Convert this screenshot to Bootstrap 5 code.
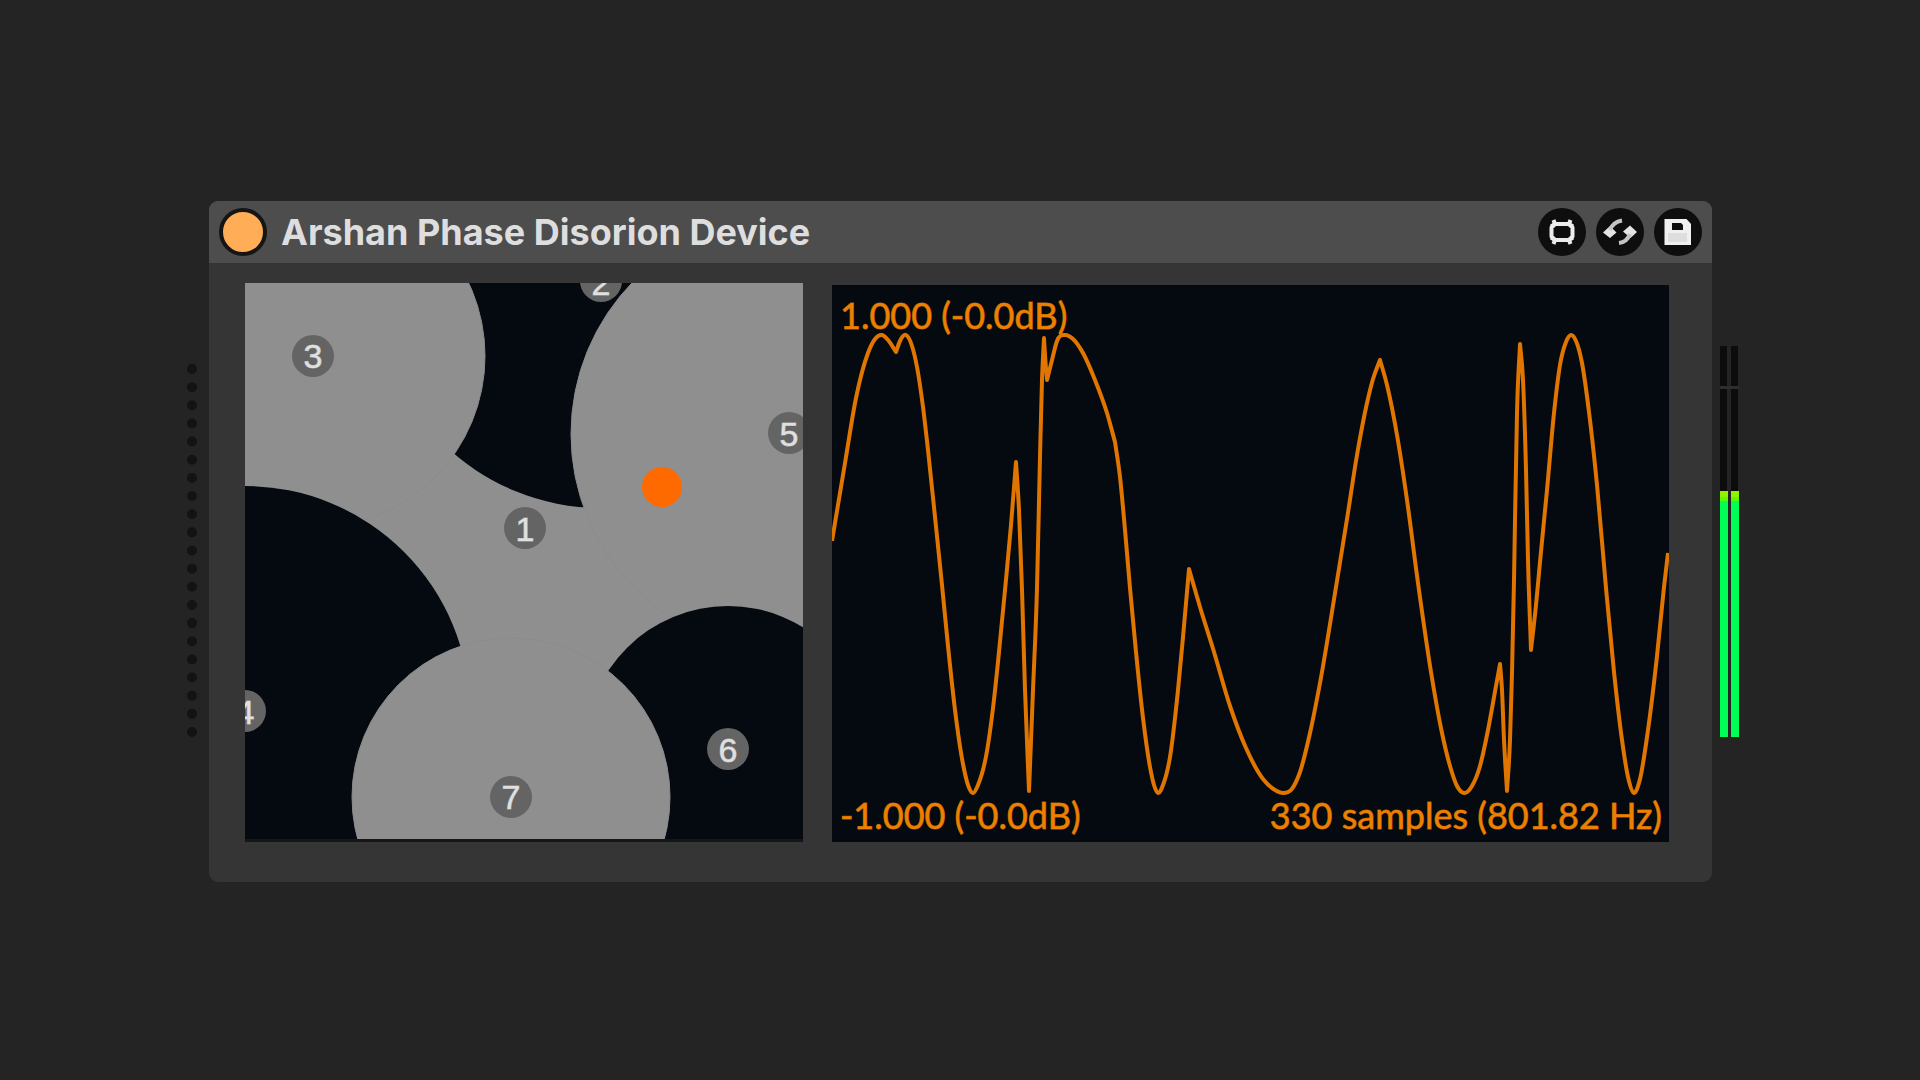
<!DOCTYPE html>
<html lang="en">
<head>
<meta charset="utf-8">
<meta name="viewport" content="width=device-width, initial-scale=1">
<title>Arshan Phase Disorion Device</title>
<link href="https://cdn.jsdelivr.net/npm/bootstrap@5.3.0/dist/css/bootstrap.min.css" rel="stylesheet">
<style>
body { background: #242424; font-family: Lato, "Liberation Sans", sans-serif; }
.rack { max-width: 1568px; padding-top: 2px; }
.handle { width: 33px; padding: 18px 0 0 11px; }
.handle svg, .meters svg { display: block; }
.meters { width: 32px; padding-left: 8px; }
.device { background: #353535; border-radius: 9px; overflow: hidden; min-width: 0; }
.device-bar { background: #4d4d4d; height: 62px; padding: 0 10px; }
.device-title { font: 700 36px/40px Inter, "Liberation Sans", sans-serif; color: #dedede; margin: 0 0 0 14px; }
.power { width: 48px; height: 48px; border: 4px solid #151515; background: #ffad56; }
.tool { width: 48px; height: 48px; background: #0e0e0e; border: 0; }
.tools { gap: 10px; }
.panels { display: grid; grid-template-columns: 558fr 837fr; gap: 29px; padding: 20px 43px 40px 36px; align-items: end; }
.pad text { font: 34px "Liberation Sans", sans-serif; fill: #e0e0e0; stroke: #e0e0e0; stroke-opacity: .6; text-anchor: middle; }
.scope { background: #050910; color: #ee8000; font-size: 36px; line-height: 40px; -webkit-text-stroke: 1px rgba(238, 128, 0, .7); }
.readout { padding: 10px 7px 7px 8px; }
</style>
<script src="https://cdn.jsdelivr.net/npm/bootstrap@5.3.0/dist/js/bootstrap.bundle.min.js"></script>
</head>
<body>
<main class="rack d-flex align-items-center mx-auto min-vh-100">
  <div class="handle flex-shrink-0">
    <svg width="10" height="374" viewBox="0 0 10 374" aria-hidden="true"><path d="M5 6V371" stroke="#131313" stroke-width="10" stroke-linecap="round" stroke-dasharray="0 18.15" fill="none"/></svg>
  </div>
  <section class="device flex-grow-1">
    <header class="device-bar d-flex align-items-center">
      <button type="button" class="power rounded-circle p-0 flex-shrink-0" aria-label="Device on"></button>
      <h1 class="device-title text-truncate">Arshan Phase Disorion Device</h1>
      <div class="tools d-flex ms-auto">
        <button type="button" class="tool rounded-circle p-0" aria-label="Open editor">
          <svg class="d-block" width="48" height="48" viewBox="0 0 48 48" fill="none" stroke="#ececec" stroke-width="4" stroke-linejoin="round"><path d="M17 16h14l3.500 3.500v9L31 32H17l-3.500-3.500v-9z"/><path d="M15.500 12l1.500 4-4 2.500M32.500 12l-1.500 4 4 2.500M15.500 36l1.500-4-4-2.500M32.500 36l-1.500-4 4-2.500"/></svg>
        </button>
        <button type="button" class="tool rounded-circle p-0" aria-label="Hot-swap preset">
          <svg class="d-block" width="48" height="48" viewBox="0 0 48 48"><path d="M7 24.500l7-6.500 6.500 6.500-6.500 5.500zM27 23.500l7-6 7 6.500-6.500 6z" fill="#e4e4e4"/><path d="M14 22q3-8 12-9.500M34 26q-3 8-11 9" fill="none" stroke="#c4c4c4" stroke-width="4"/></svg>
        </button>
        <button type="button" class="tool rounded-circle p-0" aria-label="Save preset">
          <svg class="d-block" width="48" height="48" viewBox="0 0 48 48"><path fill-rule="evenodd" d="M10.500 11h22l4.500 5v21H10.500zM18 15v7h11v-5l-2-2z" fill="#f0f0f0"/><path d="M14 25h19v9H14z" fill="#dedede"/></svg>
        </button>
      </div>
    </header>
    <div class="panels">
      <svg class="pad d-block w-100" viewBox="245 283 558 559" role="img" aria-label="Phase zones">
        <path d="M245 283h558v559H245z" fill="#8f8f8f"/>
        <circle cx="601" cy="282" r="226" fill="#050910"/>
        <circle cx="313" cy="356" r="172" fill="#8f8f8f" stroke="#8c8c8c"/>
        <circle cx="789" cy="434" r="218" fill="#8f8f8f" stroke="#8c8c8c"/>
        <circle cx="245" cy="711" r="225" fill="#050910"/>
        <circle cx="728" cy="749" r="143" fill="#050910"/>
        <circle cx="511" cy="797" r="159" fill="#8f8f8f" stroke="#8c8c8c"/>
        <path d="M245 840.500H803" stroke="#161616" stroke-width="3"/>
        <g fill="#646464">
          <circle cx="525" cy="528" r="21"/><circle cx="601" cy="281" r="21"/><circle cx="313" cy="356" r="21"/><circle cx="245" cy="711" r="21"/><circle cx="789" cy="433" r="21"/><circle cx="728" cy="749" r="21"/><circle cx="511" cy="797" r="21"/>
        </g>
        <text x="525" y="541">1</text><text x="601" y="295">2</text><text x="313" y="368">3</text><text x="245" y="724">4</text><text x="789" y="446">5</text><text x="728" y="762">6</text><text x="511" y="809">7</text>
        <circle cx="662" cy="487" r="20" fill="#ff6a00"/>
      </svg>
      <div class="scope position-relative">
        <svg class="d-block w-100" viewBox="832 285 837 557" role="img" aria-label="Waveform"><path id="wave" fill="none" stroke="#e07600" stroke-width="4" stroke-linejoin="round"/></svg>
        <div class="readout position-absolute top-0 start-0 w-100 h-100 d-flex flex-column justify-content-between">
          <div>1.000 (-0.0dB)</div>
          <div class="d-flex justify-content-between"><span>-1.000 (-0.0dB)</span><span>330 samples (801.82 Hz)</span></div>
        </div>
      </div>
    </div>
  </section>
  <div class="meters flex-shrink-0">
    <svg width="20" height="391" viewBox="0 0 20 391" role="img" aria-label="Output level"><path d="M0 0h7v390H0zM11 0h7v390h-7z" fill="#0c0c0c"/><path d="M0 40h19v3H0z" fill="#2e2e2e"/><path d="M0 145h8v246H0zM11 145h8v246h-8z" fill="#00ff55"/><path d="M0 145h8v10H0zM11 145h8v10h-8z" fill="#60f800"/><path d="M0 145h8v6H0zM11 145h8v6h-8z" fill="#90f400"/></svg>
  </div>
</main>
<script>
// Each run is smooth; the trace turns sharply where one run meets the next.
const runs = [
  [832,541,845,463,856,398,868,353,875,339,882,335,888,340,896,352],
  [896,352,900,341,906,335,912,346,917,367,923,407,928,450,935,517,942,585,948,646,955,710,963,764,968,785,973,793,978,785,987,751,993,708,998,662,1005,590,1011,525,1016,462],
  [1016,462,1019,510,1022,590,1025,690,1029,791],
  [1029,791,1033,690,1037,588,1040,457,1042,380,1044,338],
  [1044,338,1045,355,1047,380],
  [1047,380,1052,360,1057,341,1065,335,1073,339,1083,353,1095,380,1107,413,1115,442],
  [1115,442,1120,477,1125,530,1130,588,1136,652,1143,718,1150,767,1154,785,1158,793,1163,785,1170,757,1178,690,1183,637,1189,569],
  [1189,569,1200,607,1214,652,1230,706,1246,748,1263,779,1275,790,1283,793,1291,790,1300,772,1310,733,1320,683,1336,587,1347,519,1357,455,1367,403,1373,379,1380,360],
  [1380,360,1387,385,1397,435,1407,500,1418,583,1431,672,1442,733,1450,766,1457,786,1464,793,1472,786,1480,766,1488,730,1496,686,1500,664],
  [1500,664,1502,690,1504,740,1507,791],
  [1507,791,1510,740,1512,673,1514,580,1515,520,1517,413,1520,344],
  [1520,344,1523,380,1526,470,1528,560,1531,650],
  [1531,650,1536,605,1540,562,1547,490,1554,413,1560,365,1566,342,1571,335,1576,341,1582,363,1589,412,1597,485,1606,588,1614,672,1622,740,1628,777,1634,793,1640,779,1648,730,1657,656,1664,587,1668,553]
];
// Cubic segments whose slope at each sample is weighted by the spacing around it.
function curve(flat) {
  const p = [];
  for (let i = 0; i < flat.length; i += 2) p.push([flat[i], flat[i + 1]]);
  const n = p.length;
  const h = [], s = [];
  for (let i = 0; i < n - 1; i++) {
    h[i] = p[i + 1][0] - p[i][0];
    s[i] = (p[i + 1][1] - p[i][1]) / h[i];
  }
  const m = p.map((_, i) => i === 0 ? s[0] : i === n - 1 ? s[n - 2] : (s[i - 1] * h[i] + s[i] * h[i - 1]) / (h[i - 1] + h[i]));
  let d = "";
  for (let i = 0; i < n - 1; i++) {
    const k = h[i] / 3, b = p[i], c = p[i + 1];
    d += `C${b[0] + k} ${b[1] + m[i] * k} ${c[0] - k} ${c[1] - m[i + 1] * k} ${c[0]} ${c[1]}`;
  }
  return d;
}
document.getElementById("wave").setAttribute("d", "M832 541" + runs.map(curve).join(""));
</script>
</body>
</html>
